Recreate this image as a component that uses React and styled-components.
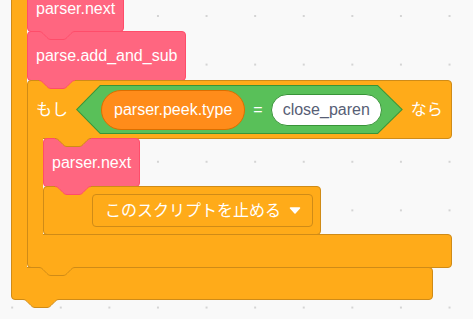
import React from 'react'
import styled, { createGlobalStyle } from 'styled-components'

const tones = {
	control: { fill: '#FFAB19', line: '#CF8B17' },
	custom: { fill: '#FF6680', line: '#FF4D6A' },
	operator: { fill: '#59C059', line: '#389438' },
	data: { fill: '#FF8C1A', line: '#DB6E00' }
}

// scratch notch, 36 wide and 8 deep
const NOTCH = 'c2,0 3,1 4,2 l4,4 c1,1 2,2 4,2 h12 c2,0 3,-1 4,-2 l4,-4 c1,-1 2,-2 4,-2'

const GlobalStyle = createGlobalStyle`
	html, body {
		margin: 0;
		padding: 0;
	}

	body {
		font-family: "Liberation Sans", "Noto Sans CJK JP", sans-serif;
	}
`

const Workspace = styled.div`
	position: relative;
	width: 473px;
	height: 319px;
	overflow: hidden;
	background-color: #F9F9F9;
	background-image: radial-gradient(circle at 1px 1px, #d4d4d4 0.9px, transparent 1.5px);
	background-size: 48.6px 48.6px;
	background-position: 11.2px 15px;
`

// the script sits at its own spot on the canvas
const Script = styled.div`
	position: absolute;
	left: 11px;
	top: -44px;
`

const Tab = styled.svg`
	position: absolute;
	top: 100%;
	left: ${p => p.$x}px;
	z-index: 3;
	overflow: visible;
	pointer-events: none;
`

const Stack = styled.div`
	display: flex;
	flex-direction: column;
	align-items: flex-start;
	flex: none;

	> * + * {
		margin-top: -1px;
	}
`

const StackBlock = styled.div`
	position: relative;
	box-sizing: border-box;
	display: flex;
	align-items: center;
	height: ${p => p.$h || 49}px;
	padding: 0 ${p => p.$pr ?? 8}px 0 ${p => p.$pl ?? 8}px;
	background: ${p => p.$tone.fill};
	border: 1px solid ${p => p.$tone.line};
	border-radius: 4px;
	color: #fff;
	font-size: 16px;
	line-height: 20px;
	white-space: nowrap;
`

const CBlock = styled.div`
	display: flex;
	flex-direction: column;
	flex: none;
	width: ${p => (p.$w ? `${p.$w}px` : 'auto')};
`

const CTop = styled.div`
	position: relative;
	box-sizing: border-box;
	display: flex;
	align-items: center;
	gap: 8px;
	height: ${p => p.$h}px;
	padding: 0 8px;
	background: ${p => p.$tone.fill};
	border: 1px solid ${p => p.$tone.line};
	border-radius: 4px 4px 4px 0;
	color: #fff;
	font-size: 16px;
	line-height: 20px;
	white-space: nowrap;
`

const CMiddle = styled.div`
	display: flex;
	margin-top: -1px;
`

const CArm = styled.div`
	position: relative;
	z-index: 1;
	flex: none;
	box-sizing: border-box;
	width: 16px;
	margin: -1px 0;
	background: ${p => p.$tone.fill};
	border-left: 1px solid ${p => p.$tone.line};
`

const CBottom = styled.div`
	position: relative;
	box-sizing: border-box;
	height: ${p => p.$h}px;
	margin-top: -1px;
	background: ${p => p.$tone.fill};
	border: 1px solid ${p => p.$tone.line};
	border-radius: 0 4px 4px 4px;
`

const Label = styled.span`
	color: #fff;
	font-size: 16px;
`

const BoolHex = styled.div`
	position: relative;
	isolation: isolate;
	box-sizing: border-box;
	display: flex;
	align-items: center;
	gap: 8px;
	height: 49px;
	padding: 0 21px 0 25px;
	background: ${tones.operator.line};
	clip-path: polygon(24px 0, calc(100% - 25px) 0, 100% 50%, calc(100% - 25px) 100%, 24px 100%, 0 50%);

	&::before {
		content: '';
		position: absolute;
		inset: 1px;
		z-index: -1;
		background: ${tones.operator.fill};
		clip-path: polygon(23.4px 0, calc(100% - 24.4px) 0, calc(100% - 0.4px) 50%, calc(100% - 24.4px) 100%, 23.4px 100%, 0.4px 50%);
	}
`

const Reporter = styled.div`
	box-sizing: border-box;
	display: flex;
	align-items: center;
	height: 40px;
	padding: 0 12px;
	background: ${tones.data.fill};
	border: 1px solid ${tones.data.line};
	border-radius: 20px;
	color: #fff;
`

const TextField = styled.div`
	box-sizing: border-box;
	display: flex;
	align-items: center;
	height: 32px;
	padding: 0 11px;
	background: #fff;
	border: 1px solid ${tones.operator.line};
	border-radius: 16px;
	color: #575E75;
`

const Dropdown = styled.div`
	box-sizing: border-box;
	display: flex;
	align-items: center;
	gap: 8px;
	height: 33px;
	padding: 0 11px 0 12px;
	border: 1px solid ${tones.control.line};
	border-radius: 4px;
	color: #fff;
`

const Notch = ({ x = 11, tone }) => (
	<Tab $x={x} width="37" height="10" viewBox="0 0 37 10">
		<path d={`M0,0 L0,0.5 ${NOTCH} L36,0 Z`} fill={tone.fill} />
		<path d={`M0,0.5 ${NOTCH}`} fill="none" stroke={tone.line} />
	</Tab>
)

const Caret = () => (
	<svg width="12" height="7" viewBox="0 0 12 7">
		<path d="M1.5,1 H10.5 L6,6 Z" fill="#fff" stroke="#fff" strokeWidth="1.5" strokeLinejoin="round" />
	</svg>
)

const Call = ({ children, h = 49 }) => (
	<StackBlock $tone={tones.custom} $h={h}>
		{children}
		<Notch tone={tones.custom} />
	</StackBlock>
)

export default function App () {
	const control = tones.control
	return (
		<Workspace>
			<GlobalStyle />
			<Script>
				<CBlock $w={422}>
					<CTop $tone={control} $h={30}>
						<Notch x={27} tone={control} />
					</CTop>
					<CMiddle>
						<CArm $tone={control} />
						<Stack>
							<Call h={47}>parser.next</Call>
							<Call h={50}>parse.add_and_sub</Call>
							<CBlock>
								<CTop $tone={control} $h={59}>
									<Label>もし</Label>
									<BoolHex>
										<Reporter>parser.peek.type</Reporter>
										<Label>=</Label>
										<TextField>close_paren</TextField>
									</BoolHex>
									<Label>なら</Label>
									<Notch x={27} tone={control} />
								</CTop>
								<CMiddle>
									<CArm $tone={control} />
									<Stack>
										<Call>parser.next</Call>
										<StackBlock $tone={control} $pl={48} $pr={7}>
											<Dropdown>
												<span>このスクリプトを止める</span>
												<Caret />
											</Dropdown>
										</StackBlock>
									</Stack>
								</CMiddle>
								<CBottom $tone={control} $h={34}>
									<Notch tone={control} />
								</CBottom>
							</CBlock>
						</Stack>
					</CMiddle>
					<CBottom $tone={control} $h={33}>
						<Notch tone={control} />
					</CBottom>
				</CBlock>
			</Script>
		</Workspace>
	)
}
